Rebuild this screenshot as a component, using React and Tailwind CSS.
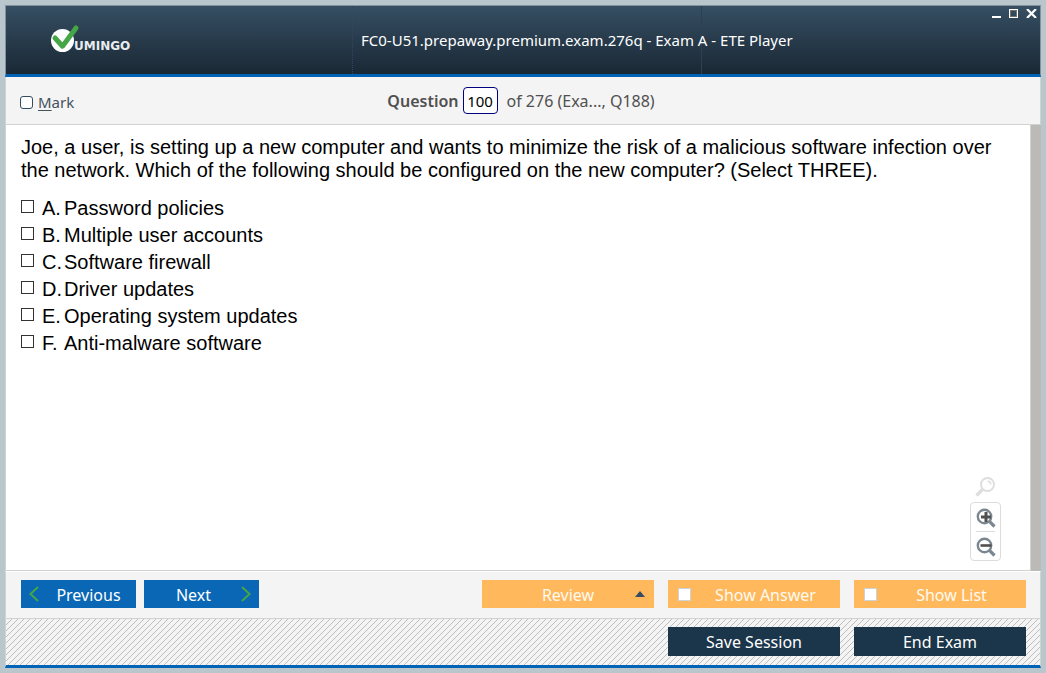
import React from "react";

const ANSWERS = [
  ["A.", "Password policies"],
  ["B.", "Multiple user accounts"],
  ["C.", "Software firewall"],
  ["D.", "Driver updates"],
  ["E.", "Operating system updates"],
  ["F.", "Anti-malware software"],
];

function Logo() {
  return (
    <div className="flex h-8 items-center" aria-label="Vumingo">
      <svg width="30" height="30" viewBox="0 0 30 30" aria-hidden="true">
        <circle cx="11.500" cy="16.500" r="11.500" fill="#fff" />
        <path d="M4 14 L11.500 22.200 L25 4" fill="none" stroke="#46a546" strokeWidth="5" strokeLinecap="round" strokeLinejoin="round" />
      </svg>
      <span className="-ml-[7px] pt-3.5 font-['DejaVu_Sans',sans-serif] text-[12px] leading-3 font-bold text-[#e9ecef]">UMINGO</span>
    </div>
  );
}

function Header() {
  return (
    <header className="grid h-[72px] grid-cols-[minmax(0,347fr)_minmax(0,349fr)_minmax(0,338fr)] border-x border-t border-b-3 border-x-[#83939b] border-t-[#83939b] border-b-[#0063b5] bg-linear-to-b from-[#364f63] to-[#1a2835] text-white">
      <div className="flex items-center border-r border-dotted border-[#34456b] pb-0.5 pl-[45px]">
        <Logo />
      </div>
      <h1 className="flex items-center border-r border-[#2d4152] pl-2 text-[15px] whitespace-nowrap">
        FC0-U51.prepaway.premium.exam.276q - Exam A - ETE Player
      </h1>
      <div className="flex items-start justify-end gap-2 pt-[3px] pr-[3px]">
        <button aria-label="Minimize">
          <svg width="9" height="9" viewBox="0 0 9 9"><path d="M0 7h9v2H0z" fill="#fff" /></svg>
        </button>
        <button aria-label="Maximize">
          <svg width="9" height="9" viewBox="0 0 9 9">
            <rect x=".5" y=".5" width="8" height="8" fill="none" stroke="#fff" />
            <rect x="1.500" y="1.500" width="6" height="6" fill="none" stroke="#77736a" />
          </svg>
        </button>
        <button aria-label="Close">
          <svg width="11" height="9" viewBox="0 0 11 9"><path d="M1 0l9 9M10 0L1 9" stroke="#fff" strokeWidth="2.200" /></svg>
        </button>
      </div>
    </header>
  );
}

function Magnifier({ sign, color }) {
  return (
    <svg width="20" height="20" viewBox="0 0 20 20" aria-hidden="true">
      <circle cx="8.500" cy="8.500" r="6.700" fill="none" stroke={color} strokeWidth="2.400" />
      <path d="M13.200 13.200 L18.500 18.500" stroke={color} strokeWidth="3.200" />
      {sign === "+" && <path d="M10 4v10M5 9h10" stroke="#505050" strokeWidth="3" />}
      {sign === "-" && <path d="M4.500 8.500h11" stroke="#505050" strokeWidth="2.600" />}
    </svg>
  );
}

function ZoomTools() {
  return (
    <div className="absolute right-[29px] bottom-[9px] flex w-[31px] flex-col items-center">
      <button aria-label="Reset zoom" className="mr-0.5 mb-[5px]">
        <svg width="20" height="20" viewBox="0 0 20 20" aria-hidden="true">
          <circle cx="12.500" cy="7.500" r="6.500" fill="none" stroke="#dedede" strokeWidth="2" />
          <path d="M12.500 4.200a3.300 3.300 0 0 1 3.300 3.300" fill="none" stroke="#dedede" strokeWidth="1.500" />
          <path d="M8 12 L1.500 18.500" stroke="#dedede" strokeWidth="3.400" />
        </svg>
      </button>
      <div className="flex w-full flex-col items-center rounded border border-[#dcdcdc] bg-white">
        <button aria-label="Zoom in" className="flex h-7 items-center pt-0.5"><Magnifier sign="+" color="#7b8790" /></button>
        <span className="h-px w-[19px] bg-[#dcdcdc]" />
        <button aria-label="Zoom out" className="flex h-7 items-center pt-0.5"><Magnifier sign="-" color="#7b8790" /></button>
      </div>
    </div>
  );
}

function Toggle({ label }) {
  return (
    <label className="flex h-7 w-[172px] items-center bg-[#ffb85c] pl-[10px] text-[#fffaf0]">
      <input type="checkbox" className="size-[13px] appearance-none border border-[#cfd3d6] bg-white checked:bg-[#334d61]" />
      <span className="flex-1 pt-0.5 text-center">{label}</span>
    </label>
  );
}

export default function App() {
  return (
    <div className="flex min-h-screen flex-col bg-[#b9c6cc] p-[5px] font-['Noto_Sans','Open_Sans',sans-serif]">
      <Header />
      <div className="flex h-12 items-center border-x border-b border-[#d2d2d2] bg-[#f4f4f4] text-[16px] text-[#505050]">
        <div className="flex-1 pt-[3px] pl-[14px]">
          <label className="flex items-center gap-[5px] text-[15px] text-[#44525e]">
            <input type="checkbox" className="size-[13px] appearance-none rounded-[3px] border border-[#334d61] bg-white checked:bg-[#334d61]" />
            <span><u className="underline-offset-2">M</u>ark</span>
          </label>
        </div>
        <div className="flex items-center pr-[18px]">
          <label htmlFor="question" className="font-semibold">Question</label>
          <input id="question" defaultValue="100" className="mr-[9px] ml-1 h-[27px] w-[35px] rounded border border-[#000080] bg-white text-center text-[15px] text-black" />
          <span>of 276 (Exa..., Q188)</span>
        </div>
        <div className="flex-1" />
      </div>
      <div className="flex flex-1">
        <main className="relative flex-1 border-x border-b border-[#d2d2d2] bg-white px-[15px] pt-[11px] font-['Liberation_Sans',Arial,sans-serif] text-[20px] leading-[23px] text-black">
          <p>
            Joe, a user, is setting up a new computer and wants to minimize the risk of a malicious software infection over the network. Which of the following should be configured on the new computer? (Select THREE).
          </p>
          <ul className="pt-[13px]">
            {ANSWERS.map(([letter, text]) => (
              <li key={letter}>
                <label className="flex h-[27px] items-center">
                  <input type="checkbox" className="mr-2 mb-1 size-[13px] appearance-none border border-[#333] bg-white checked:bg-[#333]" />
                  <span className="w-[22px]">{letter}</span>
                  <span>{text}</span>
                </label>
              </li>
            ))}
          </ul>
          <ZoomTools />
        </main>
        <div className="w-[10px] bg-[#bcbab6]" />
      </div>
      <div className="flex h-12 justify-between border-x border-t border-b border-x-[#d2d2d2] border-t-white border-b-[#d2d2d2] bg-[#f4f4f4] pt-2 pr-[14px] pl-[15px] text-[16px] text-white">
        <div className="flex gap-2">
          <button className="flex h-7 w-[115px] items-center bg-[#0967b5] pl-2">
            <svg width="10" height="16" viewBox="0 0 10 16" aria-hidden="true"><path d="M9 1L1.500 8L9 15" fill="none" stroke="#46a546" strokeWidth="2" /></svg>
            <span className="flex-1 pt-0.5 pl-0.5">Previous</span>
          </button>
          <button className="flex h-7 w-[115px] items-center bg-[#0967b5] pr-2">
            <span className="flex-1 pt-0.5 pl-0.5">Next</span>
            <svg width="10" height="16" viewBox="0 0 10 16" aria-hidden="true"><path d="M1 1L8.500 8L1 15" fill="none" stroke="#46a546" strokeWidth="2" /></svg>
          </button>
        </div>
        <div className="flex gap-[14px]">
          <button className="flex h-7 w-[172px] items-center bg-[#ffb85c] px-[9px] text-[#fffaf0]">
            <span className="flex-1 pt-0.5 pl-[10px]">Review</span>
            <svg width="10" height="6" viewBox="0 0 10 6" aria-hidden="true"><path d="M0 6L5 0L10 6z" fill="#334d61" /></svg>
          </button>
          <Toggle label="Show Answer" />
          <Toggle label="Show List" />
        </div>
      </div>
      <footer className="flex h-[49px] justify-end gap-[14px] border-x border-b-3 border-x-[#d2d2d2] border-b-[#0063b5] bg-[#f4f4f4] bg-[linear-gradient(135deg,transparent_42%,#bdbdbd_42%,#bdbdbd_54%,transparent_54%)] bg-size-[6px_6px] pt-2 pr-[14px] text-[16px] text-white">
        <button className="h-[29px] w-[172px] bg-[#1b354a]">Save Session</button>
        <button className="h-[29px] w-[172px] bg-[#1b354a]">End Exam</button>
      </footer>
    </div>
  );
}
